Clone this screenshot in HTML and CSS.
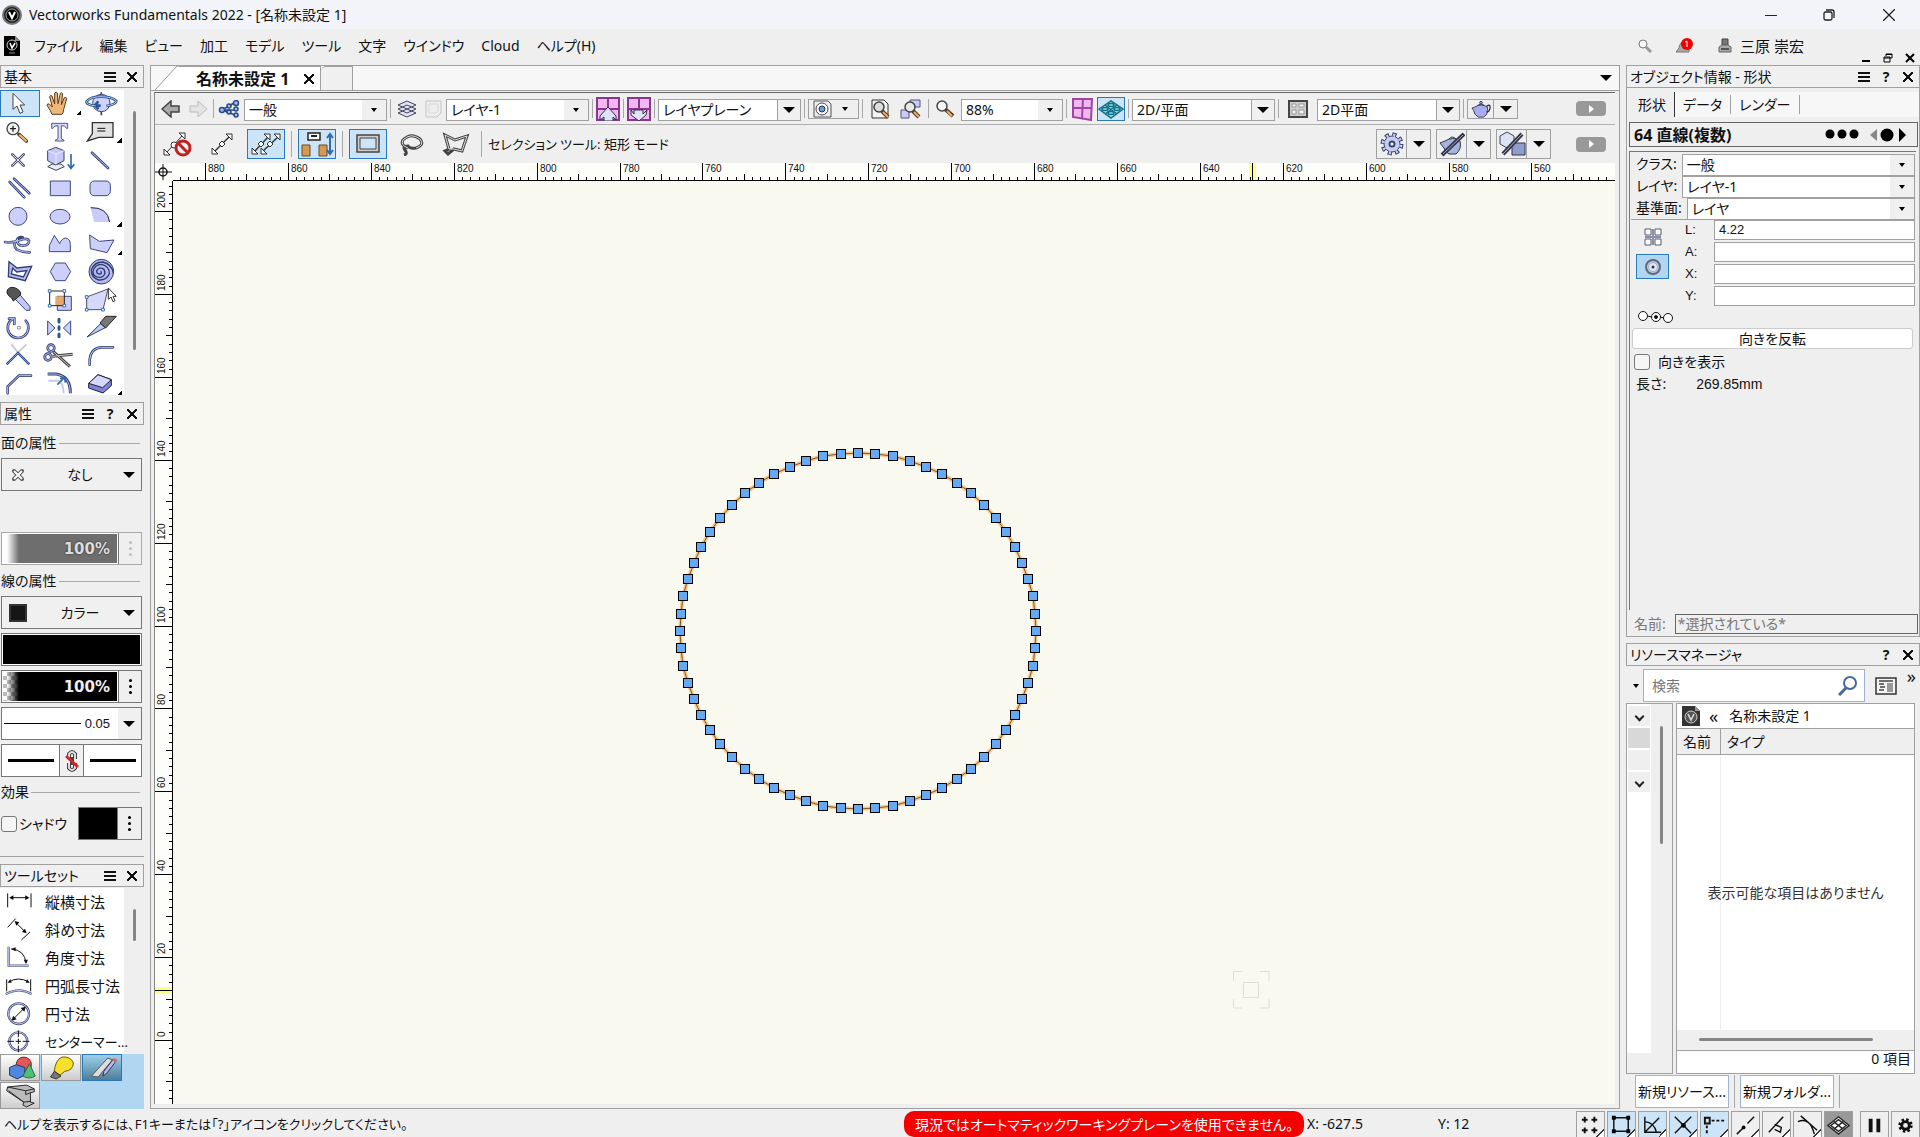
FILE: index.html
```html
<!DOCTYPE html>
<html lang="ja">
<head>
  <meta charset="utf-8">
  <title>Vectorworks Fundamentals 2022 - [名称未設定 1]</title>
  <link rel="stylesheet" href="styles.css">
</head>
<body>
  <header class="titlebar">
    <svg width="20" height="20" viewBox="0 0 20 20"><circle cx="10" cy="10" r="9" fill="#222" stroke="#777" stroke-width="2"/><circle cx="10" cy="10" r="6" fill="#000" stroke="#999"/><path d="M7 7l3 6 3-6" fill="none" stroke="#fff" stroke-width="2"/></svg>
    <h1 class="title">Vectorworks Fundamentals 2022 - [名称未設定 1]</h1>
    <div class="window-buttons">
      <button aria-label="最小化"><svg width="12" height="12"><path d="M0 6.500h12" stroke="#222"/></svg></button>
      <button aria-label="元に戻す"><svg width="12" height="12" fill="none" stroke="#222" stroke-width="1.300"><rect x="1" y="3" width="8" height="8" rx="1.500"/><path d="M3 1h6a2 2 0 0 1 2 2v6"/></svg></button>
      <button aria-label="閉じる"><svg width="12" height="12"><path d="M0 0l12 12M12 0l-12 12" stroke="#222" stroke-width="1.300"/></svg></button>
    </div>
  </header>

  <nav class="menubar">
    <svg class="doc-icon" width="16" height="20" viewBox="0 0 16 20"><path d="M0 0h11l5 5v15h-16z" fill="#000"/><path d="M11 0v5h5z" fill="#888"/><circle cx="8" cy="9" r="5" fill="none" stroke="#ccc"/><path d="M6 7l2 5 3-5" fill="none" stroke="#fff" stroke-width="1.500"/><path d="M5 17h6" stroke="#888"/></svg>
    <button>ファイル</button>
    <button>編集</button>
    <button>ビュー</button>
    <button>加工</button>
    <button>モデル</button>
    <button>ツール</button>
    <button>文字</button>
    <button>ウインドウ</button>
    <button>Cloud</button>
    <button>ヘルプ(H)</button>
    <div class="account">
      <button aria-label="検索"><svg width="14" height="14" fill="none"><circle cx="5" cy="5" r="4" stroke="#777" fill="#f8f8f8"/><path d="M8 8l5 5" stroke="#999" stroke-width="3"/></svg></button>
      <button aria-label="通知 1件"><svg width="18" height="16"><path d="M0 14h13v-3l-3-8q-6 0-7 7z" fill="#aaa" stroke="#777"/><circle cx="11" cy="6" r="6" fill="#f00000"/><path d="M9 4l2-1v6" stroke="#fff" fill="none"/></svg></button>
      <button class="user"><svg width="14" height="16"><path d="M4 1h6v6h-6z" fill="#777" stroke="#444"/><path d="M1 14v-5l3-2h6l3 2v5z" fill="#aaa" stroke="#666"/><path d="M3 11h8" stroke="#555" stroke-width="2"/></svg>三原 崇宏</button>
    </div>
    <div class="doc-buttons">
      <button aria-label="最小化"><svg width="10" height="10"><path d="M1 8h8" stroke="#000" stroke-width="2"/></svg></button>
      <button aria-label="元に戻す"><svg width="10" height="10" fill="none" stroke="#000"><path d="M3 3v-2h6v4h-2M3 1.500h6"/><path d="M1 4h6v5h-6zM1 5h6"/></svg></button>
      <button aria-label="閉じる"><svg width="10" height="10"><path d="M1 1l8 8M9 1l-8 8" stroke="#000" stroke-width="2"/></svg></button>
    </div>
  </nav>

  <main class="workspace">
    <!-- left palettes -->
    <aside class="left">
      <div class="palette-head"><h2>基本</h2><button aria-label="メニュー"><i class="burger"></i></button><button aria-label="閉じる"><i class="cross"></i></button></div>
      <div class="scroll-area tools-area">
        <div class="tools">
          <button class="on" aria-label="セレクション"><svg viewBox="0 90 120 81"><path d="M39 100v48l12-10 9 22 9-4-9-21h14z" fill="#fff" stroke="#444" stroke-width="3"/></svg></button>
          <button class="more" aria-label="パン"><svg viewBox="123 90 120 81"><path d="M156 163q-3-10-15-27q0-6 7-4l9 9l-8-31q2-6 7-2l8 24v-33q5-5 8 0l2 32l7-31q5-4 7 1l-4 33l9-21q6-3 7 3l-9 32q-1 12-5 15z" fill="#f0b878" stroke="#5b3b1a" stroke-width="3"/></svg></button>
          <button aria-label="フライオーバー"><svg viewBox="246 90 120 81" fill="none"><path d="M304 97v7M304 154v12" stroke="#345" stroke-width="5"/><circle cx="304" cy="129" r="26" fill="#cfd2fb" stroke="#3b4a80" stroke-width="3"/><path d="M287 138q-30-4-27-14q12-14 43-14q33 0 46 13q0 10-30 15M295 124l-11 13 12 10M284 137h18" stroke="#2f5590" stroke-width="8"/><path d="M287 138q-30-4-27-14q12-14 43-14q33 0 46 13q0 10-30 15" stroke="#a9c8f0" stroke-width="3"/></svg></button>
          <button aria-label="拡大表示"><svg viewBox="0 174 120 81"><path d="M57 223l22 20" stroke="#644016" stroke-width="11" stroke-linecap="round"/><path d="M60 226l18 16" stroke="#eeb880" stroke-width="6" stroke-linecap="round"/><circle cx="39" cy="206" r="18" fill="#f4f4f4" stroke="#444" stroke-width="4"/><path d="M30 206h18M39 197v18" stroke="#222" stroke-width="4"/></svg></button>
          <button aria-label="文字"><svg viewBox="123 174 120 81"><path d="M155 190h48v15h-4q-3-9-15-8v37q0 5 8 6v3h-26v-3q8-1 8-6v-37q-12-1-15 8h-4z" fill="#d5d7fb" stroke="#555c80" stroke-width="3"/></svg></button>
          <button class="more" aria-label="引出線"><svg viewBox="246 174 120 81"><path d="M277 188h62v44h-43l-34 11 15-22z" fill="#e2e2e2" stroke="#333" stroke-width="4"/><path d="M292 205h24M292 213h24" stroke="#111" stroke-width="3"/></svg></button>
          <button aria-label="2D基準点"><svg viewBox="0 258 120 81"><path d="M37 283l34 34M71 283l-34 34" stroke="#444a66" stroke-width="8" stroke-linecap="round"/><path d="M37 283l34 34M71 283l-34 34" stroke="#e8e9ff" stroke-width="3"/></svg></button>
          <button aria-label="プッシュ"><svg viewBox="123 258 120 81" stroke-width="3" stroke="#3a4060"><path d="M143 320l14-8h26l10 8-25 11z" fill="#eee"/><path d="M143 272l24-10 25 10v30l-25 13-24-13z" fill="#c5c8f8"/><path d="M143 272l25 11 24-11M168 283v30" fill="none" stroke="#eef"/><path d="M213 282v40M203 313l10 12 10-12" fill="none" stroke="#2f6ab0" stroke-width="5"/></svg></button>
          <button aria-label="直線"><svg viewBox="246 258 120 81" class="bar"><path d="M276 278l48 46"/><path class="in" d="M276 278l48 46"/></svg></button>
          <button aria-label="ダブルライン"><svg viewBox="0 342 120 81" class="bar"><path d="M29 366l44 46M42 356l46 44"/><path class="in" d="M29 366l44 46M42 356l46 44"/></svg></button>
          <button aria-label="四角形"><svg viewBox="123 342 120 81" class="shape"><path d="M151 363h60v44h-60z"/></svg></button>
          <button aria-label="隅の丸い四角形"><svg viewBox="246 342 120 81" class="shape"><rect x="270" y="363" width="61" height="44" rx="13"/></svg></button>
          <button aria-label="円"><svg viewBox="0 426 120 81" class="shape"><circle cx="54" cy="469" r="27"/></svg></button>
          <button aria-label="長円"><svg viewBox="123 426 120 81" class="shape"><ellipse cx="180" cy="470" rx="30" ry="22"/></svg></button>
          <button class="more" aria-label="円弧"><svg viewBox="246 426 120 81"><path d="M272 443q50-2 57 43h-47z" fill="#c9cbfa"/><path d="M272 443q50-2 57 43" fill="none" stroke="#223" stroke-width="3"/></svg></button>
          <button aria-label="フリーハンド"><svg viewBox="0 510 120 81" class="bar"><path d="M15 546q20 4 43-5t29 1q1 14-18 15t-17-20q7-8 16-5M50 541q-14 14 1 28q18 9 38 8"/><path class="in" d="M15 546q20 4 43-5t29 1q1 14-18 15t-17-20M50 541q-14 14 1 28q18 9 38 8"/></svg></button>
          <button aria-label="曲線"><svg viewBox="123 510 120 81" class="shape"><path d="M148 575v-18l15-31 16 25q6-16 18-17q14 2 14 20v21z"/></svg></button>
          <button class="more" aria-label="多角形"><svg viewBox="246 510 120 81" class="shape"><path d="M269 525l29 19 44-4-21 38-50-12z"/></svg></button>
          <button aria-label="ダブルポリライン"><svg viewBox="0 594 120 81"><path d="M27 605l24 19 44-5-19 43-51-12zM38 624l-4 18 36 9 10-19-30 4z" fill="#b6b9f2" fill-rule="evenodd" stroke="#2f3d70" stroke-width="4"/></svg></button>
          <button aria-label="正多角形"><svg viewBox="123 594 120 81" class="shape"><path d="M166 609h30l16 26-16 27h-30l-15-27z"/></svg></button>
          <button aria-label="渦巻き"><svg viewBox="246 594 120 81" fill="none"><circle cx="304" cy="635" r="37" fill="#b6b9f2" stroke="#2f3d70" stroke-width="3"/><path d="M302 634q5 4-1 8q-13 0-11-10q8-13 22-4q8 16-8 24q-24 2-25-17q4-22 26-22q24 6 23 28q-8 20-32 19q-23-8-22-30q8-24 34-24q28 6 32 34" stroke="#2f3d70" stroke-width="4"/></svg></button>
          <button aria-label="アイドロッパ"><svg viewBox="0 678 120 81"><path d="M46 710l12-8 32 38v11h-12l-32-33z" fill="#c3c6f8" stroke="#3b4670" stroke-width="3"/><path d="M22 690q8-12 24-6q18 8 16 20l-22 19q-5-12-14-16q-8-8-4-17z" fill="#555" stroke="#222" stroke-width="3"/></svg></button>
          <button aria-label="移動"><svg viewBox="123 678 120 81" fill="none" stroke-width="3"><path d="M172 709h42v42h-42z" fill="#c9cbfa" stroke="#3b4a80"/><path d="M166 709h27v28h-27z" fill="#e8a868"/><path d="M149 693h44v44h-44z" stroke="#222"/><path d="M145 689h8v8h-8zM189 689h8v8h-8zM145 733h8v8h-8zM189 733h8v8h-8z" fill="#fff" stroke="#3a6ea8"/></svg></button>
          <button aria-label="変形"><svg viewBox="246 678 120 81" fill="none" stroke-width="3"><path d="M260 711l64-24-15 62h-49z" fill="#d5d7fb" stroke="#555"/><path d="M256 707h8v8h-8zM256 745h8v8h-8zM305 745h8v8h-8z" fill="#fff" stroke="#3a6ea8"/><path d="M325 684v34l8-7 6 14 6-3-6-13h10z" fill="#fff" stroke="#333"/></svg></button>
          <button aria-label="回転"><svg viewBox="0 762 120 81"><g class="bar"><path d="M77 782a31 31 0 1 1-38-6M27 776h16v16"/><path class="in" d="M77 782a31 31 0 1 1-38-6M27 776h16v16"/></g><path d="M53 799h8v8h-8z" fill="none" stroke="#666" stroke-width="2"/></svg></button>
          <button aria-label="ミラー"><svg viewBox="123 762 120 81"><g class="shape"><path d="M143 783v42l22-21zM212 783v42l-22-21z"/></g><path d="M177 778v8M177 800v8M177 822v8" stroke="#2f5590" stroke-width="9" stroke-linecap="round"/></svg></button>
          <button aria-label="切断"><svg viewBox="246 762 120 81" stroke-width="3"><path d="M303 790l13 13-55 28z" fill="#b9ccf6" stroke="#2f3d70"/><path d="M300 789l17-20h32l-32 35z" fill="#777" stroke="#222"/></svg></button>
          <button aria-label="トリミング"><svg viewBox="0 846 120 81" fill="none"><path d="M54 878l25-25M54 878l-20-25" stroke="#ccc" stroke-width="6"/><path d="M20 913l34-34 34 34" stroke="#2f4f90" stroke-width="7"/><path d="M20 913l34-34 34 34" stroke="#9fb2ea" stroke-width="2"/></svg></button>
          <button aria-label="はさみ"><svg viewBox="123 846 120 81" fill="none"><path d="M160 875l50 45M158 889l60-6" stroke="#444" stroke-width="9"/><path d="M160 875l50 45M158 889l60-6" stroke="#ccc" stroke-width="3"/><circle cx="153" cy="864" r="10" stroke="#2f3d70" stroke-width="8"/><circle cx="144" cy="891" r="10" stroke="#2f3d70" stroke-width="8"/><circle cx="153" cy="864" r="10" stroke="#b6b9f2" stroke-width="3"/><circle cx="144" cy="891" r="10" stroke="#b6b9f2" stroke-width="3"/></svg></button>
          <button aria-label="フィレット"><svg viewBox="246 846 120 81" class="bar"><path d="M269 914v-16q5-35 36-36h34"/><path class="in" d="M269 914v-16q5-35 36-36h34"/></svg></button>
          <button aria-label="面取り"><svg viewBox="0 930 120 81" class="bar"><path d="M23 1000v-20l34-33h36"/><path class="in" d="M23 1000v-20l34-33h36"/></svg></button>
          <button aria-label="オフセット"><svg viewBox="123 930 120 81" fill="none"><path d="M145 962h30q14 2 16 38" stroke="#c5c8f0" stroke-width="6"/><path d="M143 942h26q43 8 42 58" stroke="#2f3d70" stroke-width="9"/><path d="M143 942h26q43 8 42 58" stroke="#b6b9f2" stroke-width="3"/><path d="M172 974l20-20M180 956l14-4 2 16" stroke="#2f6ab0" stroke-width="5"/></svg></button>
          <button class="more" aria-label="消しゴム"><svg viewBox="246 930 120 81" stroke="#223" stroke-width="3"><path d="M266 970l28-26 40 15v18l-25 22-43-15z" fill="#7f83dc"/><path d="M266 970l28-26 40 15-26 24z" fill="#d5d7fb"/></svg></button>
        </div>
        <div class="track"><div class="thumb"></div></div>
      </div>

      <div class="palette-head"><h2>属性</h2><button aria-label="メニュー"><i class="burger"></i></button><button aria-label="ヘルプ">?</button><button aria-label="閉じる"><i class="cross"></i></button></div>
      <section class="attributes">
        <h3>面の属性</h3>
        <button class="attr-button"><svg width="18" height="18"><path d="M5 5l8 8M13 5l-8 8" stroke="#555" stroke-width="4" stroke-linecap="round"/><path d="M5 5l8 8M13 5l-8 8" stroke="#fff" stroke-width="2"/></svg><span>なし</span><i class="down"></i></button>
        <div class="opacity disabled"><button class="fade" disabled>100%</button><button class="dots" disabled aria-label="面の不透明度"><i></i></button></div>
        <h3>線の属性</h3>
        <button class="attr-button"><i class="swatch"></i><span>カラー</span><i class="down"></i></button>
        <button class="attr-button color" aria-label="線の色"></button>
        <div class="opacity"><button class="fade">100%</button><button class="dots" aria-label="線の不透明度"><i></i></button></div>
        <button class="attr-button weight"><i class="rule"></i><b>0.05</b><i class="down"></i></button>
        <div class="ends">
          <button aria-label="始点マーカー"><i></i></button>
          <button aria-label="連動"><svg width="20" height="24" fill="none"><path d="M7 10v-5q3-4 6 0v5M7 14v5q3 4 6 0v-5M10 8v8" stroke="#444" stroke-width="4"/><path d="M7 10v-5q3-4 6 0v5M7 14v5q3 4 6 0v-5" stroke="#ddd" stroke-width="2"/><path d="M4 7l12 11" stroke="#d02828" stroke-width="3"/></svg></button>
          <button aria-label="終点マーカー"><i></i></button>
        </div>
        <h3>効果</h3>
        <div class="shadow"><input type="checkbox" id="shadow"><label for="shadow">シャドウ</label><button class="shadow-color" aria-label="シャドウの色"></button><button class="dots" aria-label="シャドウの設定"><i></i></button></div>
      </section>

      <div class="palette-head"><h2>ツールセット</h2><button aria-label="メニュー"><i class="burger"></i></button><button aria-label="閉じる"><i class="cross"></i></button></div>
      <div class="scroll-area set-area">
        <div class="toolset">
          <button><svg viewBox="0 144 120 84"><path d="M23 160v42M93 160v42M32 173h52" stroke="#111" stroke-width="3"/><path d="M28 173l12-7v14zM88 173l-12-7v14z"/></svg>縦横寸法</button>
          <button><svg viewBox="0 228 120 84"><path d="M23 262l24-26M64 300l26-24M48 248l28 28" stroke="#111" stroke-width="3"/><path d="M44 243l14 4-9 10zM80 280l-14-4 9-10z"/></svg>斜め寸法</button>
          <button><svg viewBox="0 312 120 84" fill="none"><path d="M26 320v57h60" stroke="#555a80" stroke-width="7"/><path d="M26 320v57h60" stroke="#c5c8f8" stroke-width="3"/><path d="M34 327q40 3 44 42" stroke="#111" stroke-width="3"/><path d="M33 327l14-5v12zM78 372l-7-13h13z" fill="#111"/></svg>角度寸法</button>
          <button><svg viewBox="0 396 120 84" fill="none"><path d="M17 462q40-22 78 0" stroke="#555a80" stroke-width="7"/><path d="M17 462q40-22 78 0" stroke="#c5c8f8" stroke-width="3"/><path d="M20 418v36M92 418v36M26 426q30-18 60 0" stroke="#111" stroke-width="3"/><path d="M23 428l8-11 4 11zM89 428l-8-11-4 11z" fill="#111"/></svg>円弧長寸法</button>
          <button><svg viewBox="0 480 120 84" fill="none"><circle cx="56" cy="521" r="31" stroke="#444a78" stroke-width="7"/><circle cx="56" cy="521" r="31" stroke="#c5c8f8" stroke-width="3"/><path d="M40 537l32-32" stroke="#111" stroke-width="3"/><path d="M35 542l4-15 11 11zM77 500l-4 15-11-11z" fill="#111"/></svg>円寸法</button>
          <button class="long"><svg viewBox="0 564 120 84" fill="none"><circle cx="55" cy="604" r="27" stroke="#444a78" stroke-width="7"/><circle cx="55" cy="604" r="27" stroke="#c5c8f8" stroke-width="3"/><path d="M55 571v20M55 617v20M22 604h20M68 604h20M47 604h16M55 596v16" stroke="#111" stroke-width="3"/></svg>センターマー...</button>
        </div>
        <div class="track"><div class="thumb"></div></div>
      </div>
      <div class="set-tabs">
        <button aria-label="3D"><svg viewBox="0 0 40 27"><circle cx="24" cy="10" r="8" fill="#e05858" stroke="#722"/><path d="M9 13l7-3 9 3v8l-8 4-8-4z" fill="#4f86e0" stroke="#235"/><path d="M30 9l6 13q-6 4-13 0z" fill="#4fbf72" stroke="#264"/></svg></button>
        <button aria-label="ビジュアライズ"><svg viewBox="0 0 40 27"><path d="M13 17q1-12 8-15q9-1 12 6q0 8-9 9l-5 4z" fill="#f7e02a" stroke="#665500"/><path d="M13 17l7 5-5 3-6-2z" fill="#777" stroke="#333"/></svg></button>
        <button class="on" aria-label="寸法/注釈"><svg viewBox="0 0 40 27"><path d="M9 22l17-19 5 2-15 18z" fill="#ddd" stroke="#555"/><path d="M21 22l1-5 10-13 3 2-10 13z" fill="#b6b9f2" stroke="#334"/><path d="M31 5l2-2 3 2-2 3z" fill="#d66"/></svg></button>
        <button aria-label="ディテール"><svg viewBox="0 0 40 27"><path d="M7 4l20-2 8 4v3l-4 1v10l4 1-8 4-4-2 1-3-18-12z" fill="#bbb" stroke="#222"/><path d="M7 4l19 4 9-2M26 8v4l5-2M24 20l7-1M8 8l16 12" stroke="#222" fill="none"/></svg></button>
      </div>
    </aside>

    <!-- drawing window -->
    <section class="document">
      <div class="tabs">
        <svg width="24" height="25"><path d="M0 25L22 1h2v24z" fill="#fff"/><path d="M0 25L22 1h2" stroke="#999" fill="none"/></svg>
        <div class="tab"><b>名称未設定 1</b><button aria-label="タブを閉じる"><i class="cross"></i></button></div>
        <button class="new-tab" aria-label="新規タブ"></button>
        <button class="tab-list" aria-label="タブ一覧"><i class="down"></i></button>
      </div>
      <div class="toolbar view-bar">
        <button class="w24" aria-label="戻る"><svg width="20" height="18"><path d="M1 9l9-8v5h8v6h-8v5z" fill="#aaa" stroke="#444" stroke-width="1.500"/></svg></button>
        <button class="w24" aria-label="進む"><svg width="20" height="18"><path d="M19 9l-9-8v5h-8v6h8v5z" fill="#e4e4e4" stroke="#bbb"/></svg></button>
        <i class="sep"></i>
        <button class="w24" aria-label="クラス"><svg width="22" height="18" stroke="#2a4a88" stroke-width="1.500" fill="#9cc0ee"><path d="M4 10l12-7M4 10h12M4 10l13 5" fill="none"/><circle cx="4" cy="10" r="2.500"/><circle cx="11" cy="6" r="2"/><circle cx="18" cy="3" r="2.500"/><circle cx="11" cy="12" r="2"/><circle cx="18" cy="9" r="2"/><circle cx="18" cy="15" r="2"/></svg></button>
        <span class="combo"><select aria-label="アクティブクラス"><option>一般</option></select></span>
        <i class="sep"></i>
        <button class="w26" aria-label="レイヤ"><svg width="20" height="18" fill="#dfe2fb" stroke="#445"><path d="M1 13l9-4 9 4-9 4zM1 9l9-4 9 4-9 4zM1 5l9-4 9 4-9 4z"/></svg></button>
        <button class="w20" aria-label="シートレイヤ"><svg width="20" height="18"><path d="M3 1h15v12l-4 4h-11z" fill="#eee" stroke="#c4c4c4"/><path d="M6 4h9v7l-2 2h-7z" fill="none" stroke="#d8d8d8"/></svg></button>
        <span class="combo"><select aria-label="アクティブレイヤ"><option>レイヤ-1</option></select></span>
        <i class="sep"></i>
        <button class="w24" aria-label="ビューを更新"><svg width="24" height="24"><path d="M1 1h22v22h-22z" fill="#f0b8ee" stroke="#8a3590" stroke-width="2"/><path d="M12 1v22M1 12h22" stroke="#8a3590" stroke-width="2"/><path d="M4 23v-4l8-9 8 9v4l-3-3v4h-9v-4z" fill="#dfe2fb" stroke="#334"/></svg></button>
        <i class="sep"></i>
        <button class="w24" aria-label="ビューに合わせる"><svg width="24" height="24"><path d="M1 1h22v22h-22z" fill="#f0b8ee" stroke="#8a3590" stroke-width="2"/><path d="M12 1v22M1 12h22" stroke="#8a3590" stroke-width="2"/><path d="M4 13l3 4v-4h9v4l4-4-1 5-7 6-8-6z" fill="#dfe2fb" stroke="#334"/></svg></button>
        <i class="sep"></i>
        <span class="combo split"><select aria-label="プレーン"><option>レイヤプレーン</option></select></span>
        <i class="sep"></i>
        <button class="drop small" aria-label="表示"><svg width="22" height="18"><path d="M3 1h14l3 3v13h-17z" fill="#eee" stroke="#555"/><circle cx="11" cy="9" r="6" fill="#fff" stroke="#446"/><circle cx="11" cy="9" r="3" fill="#6d9bd0" stroke="#234"/></svg><i class="down"></i></button>
        <i class="sep"></i>
        <button class="w28" aria-label="用紙全体を見る"><svg width="20" height="20"><path d="M2 1h12l4 4v14h-16z" fill="#f4f4f4" stroke="#333"/><path d="M12 12l6 6" stroke="#5a3a14" stroke-width="4"/><path d="M13 13l5 5" stroke="#e8b070" stroke-width="2"/><circle cx="9" cy="8" r="5" fill="#ddd" stroke="#444" stroke-width="1.500"/></svg></button>
        <button class="w28" aria-label="図形全体を見る"><svg width="22" height="20"><path d="M10 1h10v7h-10zM1 11h8v8h-8z" fill="#c9cbfa" stroke="#557"/><path d="M13 12l6 6" stroke="#5a3a14" stroke-width="4"/><path d="M14 13l5 5" stroke="#e8b070" stroke-width="2"/><circle cx="10" cy="8" r="5" fill="#e8e8e8" stroke="#444" stroke-width="1.500"/></svg></button>
        <i class="sep"></i>
        <button class="w26" aria-label="ズーム"><svg width="20" height="20"><path d="M10 10l8 7" stroke="#5a3a14" stroke-width="4"/><path d="M12 12l5 5" stroke="#e8b070" stroke-width="2"/><circle cx="7" cy="7" r="5" fill="#f4f4f4" stroke="#444" stroke-width="1.500"/></svg></button>
        <span class="combo zoom"><select aria-label="ズーム倍率"><option>88%</option></select></span>
        <i class="sep"></i>
        <button class="w24" aria-label="ワーキングプレーン"><svg width="22" height="24"><path d="M2 2l19 0-1 21-18-3z" fill="#f0b8ee" stroke="#a045a5" stroke-width="2"/><path d="M12 2l-1 19M2 11h19" stroke="#a045a5" stroke-width="2"/></svg></button>
        <button class="w28 on" aria-label="グリッド"><svg width="26" height="20" fill="#9fe2ee" stroke="#117088" stroke-width="1.500"><path d="M1 10l12-8 12 8-12 9z"/><path d="M7 6l12 9M19 6l-12 9" fill="none"/><ellipse cx="13" cy="6" rx="3" ry="1.500"/><ellipse cx="13" cy="14" rx="3" ry="1.500"/><ellipse cx="7" cy="10" rx="3" ry="1.500"/><ellipse cx="19" cy="10" rx="3" ry="1.500"/></svg></button>
        <i class="sep"></i>
        <span class="combo split"><select aria-label="現在のビュー"><option>2D/平面</option></select></span>
        <i class="sep"></i>
        <button class="w32" aria-label="マルチビュー"><svg width="20" height="18"><path d="M1 1h18v16h-18z" fill="#ccc" stroke="#444" stroke-width="2"/><path d="M4 4h4v3h-4zM11 4h5v3h-5zM4 10h4v4h-4zM11 10h5v4h-5z" fill="#f4f4f4" stroke="#999"/></svg></button>
        <span class="combo split"><select aria-label="投影の方法"><option>2D平面</option></select></span>
        <i class="sep"></i>
        <button class="drop" aria-label="レンダリング"><svg width="22" height="18" viewBox="0 0 22 20"><path d="M4 8q7-5 14 0q2 7-4 11h-6q-5-3-5-7l-2-3z" fill="#a8acf0" stroke="#334"/><path d="M7 6q4-3 8 0" fill="none" stroke="#334"/><circle cx="11" cy="3" r="1.500" fill="#a8acf0" stroke="#334"/><path d="M17 7q5-3 4 2t-4 4" fill="none" stroke="#334" stroke-width="1.500"/></svg><i class="down"></i></button>
        <button class="pill" aria-label="その他"><i></i></button>
      </div>
      <div class="toolbar mode-bar">
        <button class="mode" aria-label="変形禁止"><svg width="32" height="26"><path d="M4 22L21 4" stroke="#333"/><path d="M2 24v-6l6 6zM23 2v6l-6-6z" fill="#fff" stroke="#333"/><circle cx="12" cy="14" r="3" fill="#fff" stroke="#333"/><circle cx="21" cy="17" r="7" fill="#f0eeee" stroke="#c02020" stroke-width="3"/><path d="M16 12l10 10" stroke="#c02020" stroke-width="3"/></svg></button>
        <button class="mode" aria-label="単一図形変形"><svg width="24" height="24"><path d="M4 20L20 4" stroke="#333" stroke-width="1.500"/><path d="M2 22v-6l6 6zM22 2v6l-6-6z" fill="#fff" stroke="#333"/><path d="M9 12l3-3 3 3-3 3z" fill="#fff" stroke="#333"/></svg></button>
        <button class="mode on" aria-label="複数図形変形"><svg width="34" height="24"><path d="M5 20L19 5M13 20L29 5" stroke="#333" stroke-width="1.500"/><path d="M3 22v-6l6 6zM21 2v6l-6-6zM12 22v-6l6 6zM31 2v6l-6-6z" fill="#fff" stroke="#333"/><path d="M9 12l3-3 3 3-3 3zM18 12l3-3 3 3-3 3z" fill="#fff" stroke="#333"/></svg></button>
        <i class="sep"></i>
        <button class="mode on" aria-label="連続編集"><svg width="34" height="26"><path d="M2 14h8v11h-8zM19 14h8v11h-8z" fill="#d49a54" stroke="#6b4a1e"/><path d="M8 2h12v7h-12z" fill="#fff" stroke="#222" stroke-width="1.500"/><path d="M11 5h6" stroke="#222" stroke-width="2"/><path d="M30 4v18M27 7l3-4 3 4M27 19l3 4 3-4" fill="none" stroke="#2f6ab0" stroke-width="2"/></svg></button>
        <i class="sep"></i>
        <button class="mode on" aria-label="矩形"><svg width="26" height="22" fill="none"><path d="M2 2h22v17h-22z" fill="#ccc" stroke="#444" stroke-width="1.500"/><path d="M5 5h16v11h-16z" stroke="#444" fill="#cce4f7"/></svg></button>
        <button class="mode" aria-label="なげなわ"><svg width="26" height="24" fill="none"><path d="M9 16q-8-3-5-8q8-8 17-1q5 6-4 9q-6 1-8-2q-6 0-3 4t-1 5" stroke="#444" stroke-width="3"/><path d="M9 16q-8-3-5-8q8-8 17-1q5 6-4 9" stroke="#ddd"/></svg></button>
        <button class="mode" aria-label="多角形"><svg width="28" height="24" fill="none"><path d="M3 3l10 5 12-4-5 15-8-2-6 5-3-3 4-2z" stroke="#444" stroke-width="3"/><path d="M3 3l10 5 12-4-5 15-8-2-5 0z" stroke="#ddd"/></svg></button>
        <i class="sep"></i>
        <p>セレクション ツール: 矩形 モード</p>
        <div class="mode-options">
          <button class="drop big" aria-label="環境設定"><svg width="26" height="26"><circle cx="13" cy="13" r="9" fill="none" stroke="#3b4670" stroke-width="5" stroke-dasharray="4 3.070"/><circle cx="13" cy="13" r="8" fill="#c5cdf2" stroke="#3b4670"/><circle cx="13" cy="13" r="9" fill="none" stroke="#c5cdf2" stroke-width="3" stroke-dasharray="2 5.070" stroke-dashoffset="-1"/><circle cx="13" cy="13" r="2.500" fill="#fff" stroke="#3b4670" stroke-width="2"/></svg><i class="down"></i></button>
          <button class="drop big" aria-label="レンダー設定"><svg width="26" height="26"><path d="M6 10q8-5 15 0q2 8-4 13h-7q-4-2-5-6l-4-5z" fill="#a5b4dc" stroke="#334"/><path d="M10 8q3-4 7 0" fill="none" stroke="#334"/><path d="M3 24L25 3" stroke="#334" stroke-width="4"/><path d="M4 23L24 4" stroke="#99a6cc"/></svg><i class="down"></i></button>
          <button class="drop big" aria-label="表示設定"><svg width="28" height="26"><path d="M1 5l7-4 7 4v8l-7 4-7-4z" fill="#dde2f4" stroke="#445"/><path d="M13 12h13v12h-13z" fill="#8f9ccc" stroke="#334"/><path d="M4 23L23 3" stroke="#334" stroke-width="4"/><path d="M4 23L23 3" stroke="#aab4dd"/></svg><i class="down"></i></button>
        </div>
        <button class="pill" aria-label="その他"><i></i></button>
      </div>
      <div class="sheet">
        <svg class="origin" width="18" height="18"><circle cx="8" cy="9" r="4" fill="none" stroke="#111" stroke-width="1.500"/><path d="M8 1v16M0 9h17" stroke="#111"/></svg>
        <svg id="ruler-x"></svg>
        <svg id="ruler-y"></svg>
        <svg id="canvas"></svg>
      </div>
    </section>

    <!-- right palettes -->
    <aside class="right">
      <section class="info">
        <div class="palette-head"><h2>オブジェクト情報 - 形状</h2><button aria-label="メニュー"><i class="burger"></i></button><button aria-label="ヘルプ">?</button><button aria-label="閉じる"><i class="cross"></i></button></div>
        <div class="info-tabs"><button class="on">形状</button><button>データ</button><button>レンダー</button></div>
        <div class="selection"><b>64 直線(複数)</b><svg width="84" height="16"><circle cx="6" cy="7" r="4.500"/><circle cx="18" cy="7" r="4.500"/><circle cx="30" cy="7" r="4.500"/><path d="M53 2v12l-7-6z" fill="#888"/><circle cx="63" cy="8" r="6.500"/><path d="M75 1v14l7-7z"/></svg></div>
        <div class="fields">
          <div class="row"><label for="class">クラス:</label><span class="combo"><select id="class"><option>一般</option></select></span></div>
          <div class="row"><label for="layer">レイヤ:</label><span class="combo"><select id="layer"><option>レイヤ-1</option></select></span></div>
          <div class="row"><label for="plane">基準面:</label><span class="combo"><select id="plane"><option>レイヤ</option></select></span></div>
          <div class="coords">
            <div class="coord-modes">
              <button aria-label="直交座標"><svg width="18" height="18" fill="#fff" stroke="#555a70"><path d="M1 1h6v6h-6zM11 1h6v6h-6zM1 11h6v6h-6zM11 11h6v6h-6z"/><path d="M9 1v16M1 9h16" stroke="#8a90a8" stroke-width="2"/></svg></button>
              <button class="on" aria-label="極座標"><svg width="18" height="18" fill="none"><circle cx="9" cy="9" r="7" stroke="#667" stroke-width="2"/><circle cx="9" cy="9" r="4.500" fill="#dfe6fa" stroke="#aab"/><circle cx="9" cy="9" r="1.500" fill="#334"/></svg></button>
            </div>
            <div class="coord-inputs">
              <label for="l">L:</label><input id="l" value="4.22">
              <label for="a">A:</label><input id="a">
              <label for="x">X:</label><input id="x">
              <label for="y">Y:</label><input id="y">
            </div>
          </div>
          <svg class="nodes" width="36" height="12" fill="#fff" stroke="#111"><path d="M9 5l5 1M22 6l4 1"/><circle cx="5" cy="5" r="4.500"/><circle cx="18" cy="6" r="4.500"/><circle cx="30" cy="7" r="4.500"/><circle cx="18" cy="6" r="1.500" fill="#111"/></svg>
          <button class="reverse">向きを反転</button>
          <div class="row check"><input type="checkbox" id="direction"><label for="direction">向きを表示</label></div>
          <div class="row length"><span>長さ:</span><output>269.85mm</output></div>
        </div>
        <div class="name-row"><label for="name">名前:</label><input id="name" value="*選択されている*" disabled></div>
      </section>

      <section class="resources">
        <div class="palette-head"><h2>リソースマネージャ</h2><button aria-label="ヘルプ">?</button><button aria-label="閉じる"><i class="cross"></i></button></div>
        <div class="search-row">
          <button aria-label="検索対象"><i class="down small"></i></button>
          <div class="search"><input type="search" placeholder="検索" aria-label="検索"><svg width="20" height="20" fill="none" stroke="#44699c" stroke-width="2"><circle cx="12" cy="7" r="6"/><path d="M8 12l-7 7" stroke-width="3"/></svg></div>
          <button aria-label="プレビュー"><svg width="22" height="18"><path d="M1 1h20v16h-20z" fill="#f4f4f4" stroke="#333" stroke-width="1.500"/><path d="M4 4h14M4 7h5M5 10h5M4 13h5" stroke="#444" stroke-width="1.500"/><path d="M12 6h6v9h-6z" fill="#999"/></svg></button>
          <button class="overflow" aria-label="その他">»</button>
        </div>
        <div class="browser">
          <div class="files">
            <div class="file-list">
              <button aria-label="展開"><i class="chevron"></i></button>
              <button class="on" aria-label="開いているファイル"></button>
              <button aria-label="お気に入り"></button>
              <button aria-label="展開"><i class="chevron"></i></button>
            </div>
            <div class="track"><div class="thumb"></div></div>
          </div>
          <div class="listing">
            <div class="crumb"><svg width="18" height="20"><path d="M0 0h13l5 5v15h-18z" fill="#333"/><circle cx="9" cy="11" r="6" fill="#555" stroke="#ccc"/><path d="M6 8l3 6 3-6" fill="none" stroke="#ddd" stroke-width="1.500"/><path d="M13 0v5h5z" fill="#999"/></svg><button>«</button>名称未設定 1</div>
            <table>
              <thead><tr><th>名前</th><th>タイプ</th></tr></thead>
              <tbody><tr><td colspan="2">表示可能な項目はありません</td></tr></tbody>
            </table>
            <div class="hscroll"><div></div></div>
            <p class="count">0 項目</p>
          </div>
        </div>
        <div class="resource-buttons"><button>新規リソース...</button><i class="sep"></i><button>新規フォルダ...</button><i class="sep"></i></div>
      </section>
    </aside>
  </main>

  <footer class="statusbar">
    <p class="hint">ヘルプを表示するには、F1キーまたは「?」アイコンをクリックしてください。</p>
    <p class="alert">現況ではオートマティックワーキングプレーンを使用できません。</p>
    <p class="coord">X: -627.5</p>
    <p class="coord">Y: 12</p>
    <div class="snaps">
      <button aria-label="グリッドスナップ"><svg viewBox="0 0 28 26"><path d="M5 8h6M8 5v6M15 8h6M18 5v6M5 19h6M8 16v6M15 19h6M18 16v6" stroke="#111" stroke-width="2"/></svg></button>
      <button class="on" aria-label="図形スナップ"><svg viewBox="0 0 28 26"><path d="M6 6h15v14h-15z" fill="none" stroke="#111" stroke-width="1.500"/><path d="M4 4h4v4h-4zM19 4h4v4h-4zM4 18h4v4h-4zM19 18h4v4h-4z"/></svg></button>
      <button class="on" aria-label="角度スナップ"><svg viewBox="0 0 28 26" fill="none" stroke="#111" stroke-width="1.500"><path d="M6 5v16h17M6 21L21 6M6 10q10 1 12 11"/></svg></button>
      <button class="on" aria-label="交点スナップ"><svg viewBox="0 0 28 26"><path d="M5 5l17 17M22 5L5 22" stroke="#111" stroke-width="1.500"/><circle cx="14" cy="14" r="2.500"/></svg></button>
      <button class="on" aria-label="スマートポイント"><svg viewBox="0 0 28 26" fill="none" stroke="#111" stroke-width="2"><path d="M4 6h5v6h-5z"/><path d="M11 9h14" stroke-dasharray="3 2"/><path d="M6 14v8" stroke-dasharray="3 2"/></svg></button>
      <button aria-label="定点スナップ"><svg viewBox="0 0 28 26"><path d="M5 23l8-8M16 12l7-7" stroke="#111" stroke-width="1.500"/><circle cx="12" cy="16" r="2"/></svg></button>
      <button aria-label="スマートエッジ"><svg viewBox="0 0 28 26" fill="none" stroke="#111" stroke-width="1.500"><path d="M6 21L21 5M12 13l7 3-1 5-6-3"/></svg></button>
      <button aria-label="接線スナップ"><svg viewBox="0 0 28 26" fill="none" stroke="#111" stroke-width="1.500"><path d="M4 10q13-5 17 13M7 4l17 15"/></svg></button>
      <button class="plane" aria-label="ワーキングプレーンスナップ"><svg viewBox="0 0 28 26" fill="#fff" stroke="#222" stroke-width="1.500"><path d="M3 14l11-9 11 9-11 9z"/><path d="M9 10l10 8M19 10l-10 8M6 14l8-6 8 6-8 6z" fill="none"/></svg></button>
    </div>
    <div class="snaps">
      <button class="plain" aria-label="一時停止"><svg viewBox="0 0 28 26"><path d="M10 7v14M18 7v14" stroke="#111" stroke-width="4"/></svg></button>
      <button class="plain" aria-label="スナップ設定"><svg viewBox="0 0 28 26" fill="none" stroke="#111"><circle cx="14" cy="14" r="4" stroke-width="3"/><circle cx="14" cy="14" r="6" stroke-width="3" stroke-dasharray="2.500 2.210"/></svg></button>
    </div>
  </footer>
  <script src="script.js"></script>
</body>
</html>
```

FILE: styles.css
```css
* {
  box-sizing: border-box;
}
body {
  margin: 0;
  height: 100vh;
  display: grid;
  grid-template-rows: 29px 36px 1fr 28px;
  overflow: hidden;
  background: #efefef;
  color: #111;
  font: 14px/20px "Noto Sans", "Noto Sans CJK JP", sans-serif;
  font-feature-settings: "palt";
}
h1, h2, h3, p {
  margin: 0;
  font-size: 14px;
  font-weight: normal;
  white-space: nowrap;
}
button, input, select {
  font: inherit;
  font-feature-settings: inherit;
  color: inherit;
  margin: 0;
}
button {
  display: flex;
  align-items: center;
  justify-content: center;
  padding: 0;
  border: 0;
  background: none;
  white-space: nowrap;
}
svg {
  flex: none;
  display: block;
}

/* title and menus */
.titlebar {
  display: flex;
  align-items: center;
  gap: 7px;
  padding-left: 2px;
  background: #f2f4f9;
}
.window-buttons {
  display: flex;
  margin-left: auto;
}
.window-buttons button {
  width: 58px;
  height: 28px;
}
.window-buttons button:last-child {
  width: 62px;
}
.menubar {
  display: flex;
  align-items: center;
  gap: 17px;
  padding-left: 4px;
  padding-bottom: 2px;
}
.doc-icon {
  margin-right: -3px;
}
.account {
  display: flex;
  gap: 24px;
  margin-left: auto;
  margin-right: 40px;
}
.user {
  gap: 8px;
  font-size: 15px;
}
.doc-buttons {
  display: flex;
  align-self: flex-end;
  gap: 12px;
  padding-right: 5px;
}

/* shared glyphs */
.burger {
  width: 12px;
  height: 10px;
  border: solid #111;
  border-width: 2px 0;
  background: linear-gradient(#111, #111) center / 100% 2px no-repeat;
}
.cross {
  width: 10px;
  height: 10px;
  background:
    linear-gradient(45deg, transparent 43%, #111 43%, #111 57%, transparent 57%),
    linear-gradient(-45deg, transparent 43%, #111 43%, #111 57%, transparent 57%);
}
.down {
  width: 0;
  height: 0;
  border: 6px solid transparent;
  border-top-color: #000;
  border-bottom: 0;
}
.down.small, .drop.small .down {
  border-width: 4px 3px 0;
}
.chevron {
  width: 7px;
  height: 7px;
  border: solid #222;
  border-width: 0 2px 2px 0;
  transform: rotate(45deg);
}
.sep {
  align-self: stretch;
  width: 1px;
  margin: 6px 0;
  background: #a8a8a8;
}
.track {
  flex: 1;
  display: flex;
  justify-content: center;
}
.thumb {
  width: 3px;
  border-radius: 2px;
  background: #858585;
}

/* palettes */
.workspace {
  display: grid;
  grid-template-columns: 144px 1fr 294px;
  gap: 6px;
  min-height: 0;
}
.left, .right, .info, .resources {
  display: flex;
  flex-direction: column;
  min-height: 0;
}
.palette-head {
  display: flex;
  align-items: center;
  height: 23px;
  flex: none;
  padding-left: 3px;
  border: 1px solid #a0a0a0;
  background: #f0f0f0;
}
.palette-head h2 {
  flex: 1;
}
.palette-head button {
  width: 22px;
  font-weight: bold;
}
.scroll-area {
  display: flex;
  overflow: hidden;
  flex: none;
}
.tools-area {
  height: 305px;
  margin: 2px 0 7px;
}
.tools {
  display: grid;
  grid-template-columns: repeat(3, 41px);
  grid-auto-rows: 28px;
  width: 124px;
  background: #fff;
}
.tools button {
  position: relative;
  width: 40px;
  height: 27px;
}
.tools svg {
  width: 40px;
  height: 27px;
}
.tools .on, .mode.on, .view-bar .on {
  background: #cce4f7;
  outline: 1px solid #2a7ab8;
  outline-offset: -1px;
}
.tools .more::after {
  content: "";
  position: absolute;
  right: 0;
  bottom: 2px;
  width: 5px;
  height: 5px;
  background: linear-gradient(135deg, transparent 50%, #000 50%);
}
.shape {
  fill: #cdcffb;
  stroke: #3b4a80;
  stroke-width: 3;
}
.bar {
  fill: none;
  stroke: #39467c;
  stroke-width: 8;
  stroke-linecap: round;
}
.bar .in {
  stroke: #bcc2f5;
  stroke-width: 3;
}
.tools-area .thumb {
  margin: 21px 0 45px;
}

.attributes {
  display: flex;
  flex-direction: column;
  gap: 4px;
  height: 432px;
  flex: none;
  padding: 7px 2px 0 1px;
  margin-bottom: 7px;
  border-bottom: 1px solid #a0a0a0;
}
.attributes h3 {
  display: flex;
  align-items: center;
  gap: 2px;
  height: 22px;
  margin-right: 2px;
}
.attributes h3::after {
  content: "";
  flex: 1;
  height: 1px;
  background: #a8a8a8;
}
.attr-button, .opacity, .ends, .shadow {
  width: 141px;
  height: 33px;
  flex: none;
}
.attr-button {
  border: 1px solid #777;
  background: #f0f0f0;
  padding: 0 6px 0 7px;
}
.attr-button span {
  flex: 1;
  padding-left: 10px;
}
.attr-button .swatch {
  width: 18px;
  height: 18px;
  border: 2px solid #333;
  background: #161616;
}
.color {
  background: #000;
  box-shadow: inset 0 0 0 1px #fff;
}
.opacity {
  display: flex;
  border: 1px solid #777;
}
.opacity.disabled {
  margin: 37px 0 1px;
  border-color: #a8a8a8;
}
.fade {
  flex: 1;
  justify-content: flex-end;
  padding-right: 7px;
  border: 1px solid #fff;
  background: linear-gradient(to right, transparent 4px, #000 16px), repeating-conic-gradient(#bbb 0 25%, #fff 0 50%) 0 0 / 8px 8px;
  color: #eee;
  font: bold 15px/20px "DejaVu Sans", sans-serif;
}
.disabled .fade {
  background: linear-gradient(to right, #fff 4px, #6e6e6e 16px);
  color: #ddd;
  text-shadow: 0 0 2px #222;
}
.dots {
  width: 23px;
  border-left: 1px solid #777;
}
.dots i {
  width: 3px;
  height: 3px;
  border-radius: 50%;
  background: #000;
  box-shadow: 0 -6px #000, 0 6px #000;
}
.disabled .dots i {
  opacity: .2;
}
.weight {
  gap: 4px;
  padding-left: 2px;
  background: linear-gradient(to left, #f0f0f0 23px, #fff 23px);
}
.weight .rule {
  flex: 1;
  height: 1px;
  background: #000;
}
.weight b {
  font: 13px "Liberation Sans", sans-serif;
  padding-right: 9px;
}
.ends {
  display: grid;
  grid-template-columns: 57px 25px 1fr;
  border: 1px solid #777;
}
.ends button {
  background: #fff;
}
.ends button:nth-child(2) {
  border: solid #777;
  border-width: 0 1px;
  background: #f0f0f0;
}
.ends i {
  width: 46px;
  height: 3px;
  background: #000;
}
.shadow {
  display: flex;
  align-items: center;
}
input[type="checkbox"] {
  appearance: none;
  width: 16px;
  height: 16px;
  flex: none;
  border: 1px solid #777;
  border-radius: 3px;
  background: #f6f6f6;
}
.shadow label {
  flex: 1;
  padding-left: 2px;
}
.shadow-color {
  width: 40px;
  height: 33px;
  border: 1px solid #777;
  background: #000;
}
.shadow .dots {
  height: 33px;
  width: 24px;
  border: 1px solid #777;
  border-left: 0;
}

.set-area {
  height: 167px;
  padding-top: 1px;
}
.toolset {
  width: 124px;
  background: #fff;
}
.toolset button {
  width: 124px;
  height: 28px;
  gap: 5px;
  justify-content: flex-start;
  font-size: 15px;
}
.toolset .long {
  font-size: 13px;
}
.toolset svg {
  width: 40px;
  height: 28px;
}
.set-area .thumb {
  height: 32px;
  margin-top: 21px;
}
.set-tabs {
  flex: 1;
  display: grid;
  grid-template-columns: repeat(3, 40px);
  grid-auto-rows: 27px;
  gap: 1px;
  align-content: start;
  background: #b1d6f1;
}
.set-tabs button {
  border: 1px solid #999;
  background: linear-gradient(#fff, #ccc);
}
.set-tabs .on {
  border-color: #2a7ab8;
  background: linear-gradient(#9ed0ea, #4d7d9c);
}
.set-tabs svg {
  width: 38px;
  height: 26px;
}

/* drawing window */
.document {
  display: flex;
  flex-direction: column;
  min-width: 0;
  min-height: 0;
  border: 1px solid #a0a0a0;
  padding: 0 4px 4px 3px;
}
.tabs {
  display: flex;
  align-items: flex-end;
  height: 25px;
  flex: none;
  margin: 0 -4px 1px -3px;
  padding-left: 4px;
  border-bottom: 1px solid #a0a0a0;
  background: #f7f7f7;
}
.tab {
  display: flex;
  align-items: center;
  gap: 15px;
  height: 24px;
  padding: 0 6px 0 17px;
  border: solid #a0a0a0;
  border-width: 1px 1px 0 0;
  background: #fff;
  font-size: 16px;
}
.new-tab {
  width: 32px;
  height: 24px;
  border: solid #a0a0a0;
  border-width: 1px 1px 0 0;
  border-top-left-radius: 5px;
  background: #f0f0f0;
}
.tab-list {
  align-self: center;
  margin-left: auto;
  padding-right: 7px;
}
.toolbar {
  display: flex;
  align-items: center;
  gap: 3px;
  flex: none;
  padding: 0 9px 0 4px;
  border-top: 1px solid #666;
  border-left: 1px solid #888;
}
.view-bar {
  height: 32px;
  white-space: nowrap;
}
.mode-bar {
  height: 39px;
  gap: 6px;
  border-top-color: #b0b0b0;
}
.mode-bar p {
  font-size: 13px;
}
.w20 { width: 20px; }
.w24 { width: 24px; }
.w26 { width: 26px; }
.w28 { width: 28px; }
.w32 { width: 32px; }
.view-bar button {
  height: 24px;
  flex: none;
}
.combo {
  display: grid;
  align-items: center;
  width: 143px;
  height: 20px;
  flex: none;
}
.combo::after {
  content: "";
  grid-area: 1 / 1;
  justify-self: end;
  margin-right: 10px;
  border: solid transparent;
  border-width: 4px 3px 0;
  border-top-color: #000;
  pointer-events: none;
}
.combo select {
  grid-area: 1 / 1;
  appearance: none;
  width: 100%;
  height: 100%;
  padding: 0 4px;
  border: 1px solid #a0a0a0;
  border-radius: 0;
  background: linear-gradient(to left, #f0f0f0 24px, #fff 24px);
}
.combo.split::after {
  margin-right: 6px;
  border-width: 6px 6px 0;
}
.combo.split select {
  background: linear-gradient(to left, #f0f0f0 22px, #a0a0a0 22px, #a0a0a0 23px, #fff 23px);
}
.combo.zoom {
  width: 102px;
}
.drop {
  width: 51px;
  border: 1px solid #a0a0a0;
  justify-content: space-between;
  padding: 0 5px 0 2px;
  background: linear-gradient(to left, transparent 23px, #a0a0a0 23px, #a0a0a0 24px, transparent 24px);
}
.view-bar .drop {
  height: 20px;
}
.drop.small {
  padding-right: 10px;
  background: #efefef;
}
.drop.big {
  width: 55px;
  height: 30px;
}
.pill {
  width: 30px;
  border-radius: 4px;
  background: #999;
  margin-left: auto;
}
.toolbar .pill {
  height: 15px;
}
.mode-bar .pill {
  margin-left: 19px;
}
.pill i {
  border: solid transparent;
  border-width: 4px 0 4px 5px;
  border-left-color: #fff;
}
.mode {
  width: 38px;
  height: 30px;
}
.mode-options {
  display: flex;
  gap: 5px;
  margin-left: auto;
}
.sheet {
  flex: 1;
  display: grid;
  grid-template-columns: 18px 1fr;
  grid-template-rows: 18px 1fr;
  min-height: 0;
  border-left: 1px solid #888;
  background: #fdfdf9;
}
.sheet svg {
  width: 100%;
  height: 100%;
  min-height: 0;
}
#canvas {
  background: #f9f9f0;
}
.ruler-label {
  font: 10px "Liberation Sans", sans-serif;
  fill: #111;
}

/* object info */
.right {
  gap: 6px;
}
.info {
  height: 572px;
  flex: none;
  border: solid #a0a0a0;
  border-width: 0 1px 1px;
}
.right .palette-head {
  margin: 0 -1px;
}
.info-tabs {
  display: flex;
  align-items: center;
  height: 25px;
  margin: 4px 0 5px 3px;
  background: #f7f7f7;
}
.info-tabs button {
  padding: 0 8px;
  height: 19px;
  border-right: 1px solid #a0a0a0;
}
.info-tabs .on {
  height: 25px;
  border-right-color: #333;
  background: #efefef;
}
.selection {
  display: flex;
  align-items: center;
  justify-content: space-between;
  height: 25px;
  margin: 0 1px 4px 2px;
  padding: 0 9px 0 4px;
  border: 1px solid #666;
}
.selection b {
  font-size: 16px;
}
.fields {
  flex: 1;
  margin: 0 3px 4px 2px;
  padding: 1px 1px 0;
  border: solid #777;
  border-width: 1px 0 0 1px;
}
.row {
  display: flex;
  align-items: center;
  gap: 5px;
  height: 22px;
  padding-left: 5px;
}
.row .combo {
  flex: 1;
}
.coords {
  display: flex;
  height: 110px;
  border-top: 1px solid #a0a0a0;
}
.coord-modes {
  display: flex;
  flex-direction: column;
  padding: 4px 0 0 5px;
  gap: 5px;
}
.coord-modes button {
  width: 33px;
  height: 25px;
}
.coord-modes .on {
  border: 1px solid #2a7ab8;
  background: #b1d6f1;
}
.coord-inputs {
  flex: 1;
  display: grid;
  grid-template-columns: 29px 1fr;
  grid-auto-rows: 20px;
  row-gap: 2px;
  padding-left: 16px;
  font: 13px/20px "Liberation Sans", sans-serif;
}
.coord-inputs input {
  min-width: 0;
  padding: 0 4px;
  border: 1px solid #a0a0a0;
}
.nodes {
  margin: -18px 0 5px 7px;
}
.reverse {
  width: calc(100% - 3px);
  height: 21px;
  margin: 0 1px 2px;
  border: 1px solid #ccc;
  border-radius: 3px;
  background: #fff;
}
.check {
  gap: 8px;
  padding-left: 3px;
}
.length {
  gap: 30px;
}
.length output {
  font: 14px "Liberation Sans", sans-serif;
}
.name-row {
  display: flex;
  align-items: center;
  gap: 9px;
  margin: 0 1px 2px 7px;
  color: #777;
}
.name-row input {
  flex: 1;
  min-width: 0;
  height: 20px;
  padding: 0 2px;
  border: 1px solid #666;
  background: #efefef;
}

/* resource manager */
.resources {
  flex: 1;
}
.resources .palette-head {
  margin: 0;
}
.search-row {
  display: flex;
  align-items: center;
  gap: 10px;
  padding: 3px 4px 1px 7px;
}
.search-row button:first-child {
  margin-right: -6px;
}
.search {
  flex: 1;
  display: flex;
  align-items: center;
  min-width: 0;
  height: 33px;
  padding: 0 6px 0 8px;
  border: 1px solid #9db4d0;
  background: #fff;
}
.search input {
  flex: 1;
  min-width: 0;
  border: 0;
  padding: 0;
  outline: 0;
  background: none;
}
.search input::placeholder {
  color: #777;
}
.overflow {
  align-self: flex-start;
  font-size: 18px;
  height: 14px;
}
.browser {
  flex: 1;
  display: flex;
  gap: 3px;
  min-height: 0;
}
.files {
  display: flex;
  width: 47px;
  border: 1px solid #a0a0a0;
}
.file-list {
  display: flex;
  flex-direction: column;
  gap: 2px;
  width: 24px;
  margin-bottom: 20px;
  padding: 2px 1px;
  background: #fff;
}
.file-list button {
  height: 20px;
  background: #efefef;
}
.file-list .on {
  background: #d8d8d8;
}
.files .thumb {
  height: 118px;
  margin-top: 22px;
}
.listing {
  flex: 1;
  display: flex;
  flex-direction: column;
  min-width: 0;
  margin-right: 5px;
  border: 1px solid #a0a0a0;
  background: #fff;
}
.crumb {
  display: flex;
  align-items: center;
  gap: 9px;
  height: 25px;
  padding-left: 5px;
  border-bottom: 1px solid #a0a0a0;
}
.crumb button {
  font-size: 18px;
  margin-right: 2px;
}
table {
  flex: 1;
  display: grid;
  grid-template-rows: 26px 1fr;
  border-spacing: 0;
}
thead tr {
  display: grid;
  grid-template-columns: 44px 1fr;
  height: 26px;
  border-bottom: 1px solid #a0a0a0;
  background: #efefef;
}
th {
  padding: 3px 6px;
  font-weight: normal;
  text-align: left;
}
th:first-child {
  border-right: 1px solid #a0a0a0;
}
tbody {
  display: grid;
  background: linear-gradient(#eee, #eee) 43px 0 / 1px 100% no-repeat;
}
tbody tr {
  display: grid;
  align-items: center;
  justify-content: center;
}
td {
  padding: 0;
  color: #333;
}
.hscroll {
  height: 21px;
  padding: 8px 41px 0 22px;
  border-bottom: 1px solid #a0a0a0;
  background: #efefef;
}
.hscroll div {
  height: 3px;
  border-radius: 2px;
  background: #858585;
}
.count {
  height: 22px;
  line-height: 16px;
  padding-right: 3px;
  text-align: right;
}
.resource-buttons {
  display: flex;
  gap: 5px;
  height: 35px;
  padding: 1px 0 1px 9px;
}
.resource-buttons button {
  width: 94px;
  border: 1px solid #9db4d0;
  background: #fff;
}
.resource-buttons .sep {
  margin: 0;
}

/* status bar */
.statusbar {
  display: flex;
  align-items: center;
  padding: 2px 0 0 4px;
}
.hint {
  flex: 1;
  font-size: 13px;
}
.alert {
  width: 400px;
  height: 26px;
  margin-right: 3px;
  border-radius: 10px;
  background: #f40000;
  color: #fff;
  line-height: 28px;
  text-align: center;
}
.coord {
  width: 131px;
}
.snaps {
  display: flex;
  gap: 2px;
  margin-left: 7px;
}
.snaps button {
  width: 29px;
  height: 26px;
  border: 1px solid #a0a0a0;
  border-bottom: 0;
  background: linear-gradient(135deg, transparent 50%, #333 50%, #333 60%, #fff 60%) right bottom / 8px 8px no-repeat;
}
.snaps button.on {
  background-color: #cce4f7;
}
.snaps button.plane {
  background: #999;
}
.snaps button.plain {
  background: none;
}
.snaps svg {
  width: 27px;
  height: 25px;
}
```

FILE: script.js
```js
// Pixels per drawing unit at 88 %
var scale = 82.9 / 20;
var svgNS = 'http://www.w3.org/2000/svg';

function add(parent, name, attrs, text) {
  var el = document.createElementNS(svgNS, name);
  for (var key in attrs) el.setAttribute(key, attrs[key]);
  if (text !== undefined) el.textContent = text;
  parent.appendChild(el);
  return el;
}

// Horizontal ruler: values fall from left to right
function drawRulerX() {
  var ruler = document.getElementById('ruler-x');
  var width = ruler.clientWidth;
  var x880 = 32;
  add(ruler, 'rect', { x: 1076, y: 0, width: 7, height: 18, fill: '#ffff80' });
  for (var v = 886; ; v -= 2) {
    var x = Math.round(x880 + (880 - v) * scale);
    if (x > width - 4) break;
    var size = v % 20 === 0 ? 18 : v % 10 === 0 ? 6 : 3;
    add(ruler, 'rect', { x: x, y: 17 - size, width: 1, height: size, fill: '#000' });
    if (v % 20 === 0) add(ruler, 'text', { x: x + 3, y: 9, 'class': 'ruler-label' }, v);
  }
  add(ruler, 'rect', { x: 1079, y: 0, width: 1, height: 18, fill: '#000' });
  add(ruler, 'rect', { x: 0, y: 17, width: width, height: 1, fill: '#000' });
}

// Vertical ruler: labels read upwards
function drawRulerY() {
  var ruler = document.getElementById('ruler-y');
  var height = ruler.clientHeight;
  var y200 = 30;
  add(ruler, 'rect', { x: 0, y: 806, width: 18, height: 7, fill: '#ffff80' });
  for (var v = 206; ; v -= 2) {
    var y = Math.round(y200 + (200 - v) * scale);
    if (y > height) break;
    var size = v % 20 === 0 ? 18 : v % 10 === 0 ? 6 : 3;
    add(ruler, 'rect', { x: 17 - size, y: y, width: size, height: 1, fill: '#000' });
    if (v % 20 === 0) {
      add(ruler, 'text', { transform: 'translate(10 ' + (y - 3) + ') rotate(-90)', 'class': 'ruler-label' }, v);
    }
  }
  add(ruler, 'rect', { x: 0, y: 809, width: 18, height: 1, fill: '#000' });
  add(ruler, 'rect', { x: 17, y: 0, width: 1, height: height, fill: '#000' });
}

// 64 selected lines forming a circle, one handle at each joint
function drawSelection() {
  var canvas = document.getElementById('canvas');
  var cx = 685, cy = 450, r = 178, count = 64;
  var points = [];
  for (var i = 0; i < count; i++) {
    var a = i * 2 * Math.PI / count;
    points.push([Math.round(cx + r * Math.cos(a)), Math.round(cy + r * Math.sin(a))]);
  }
  add(canvas, 'polygon', { points: points.join(' '), fill: 'none', stroke: '#f6c98e', 'stroke-width': 4 });
  add(canvas, 'polygon', { points: points.join(' '), fill: 'none', stroke: '#8a5420', 'stroke-width': 1 });
  points.forEach(function(p) {
    add(canvas, 'rect', { x: p[0] - 4.5, y: p[1] - 4.5, width: 9, height: 9, fill: '#65a9f5', stroke: '#000' });
  });
  add(canvas, 'path', {
    d: 'M1060.5 800v-9.500h9M1087 790.500h9v9.500M1096 818v9h-9M1069 827h-8.500v-9M1070.500 801.500h15v15h-15z',
    fill: 'none', stroke: '#deded6'
  });
}

drawRulerX();
drawRulerY();
drawSelection();
```
